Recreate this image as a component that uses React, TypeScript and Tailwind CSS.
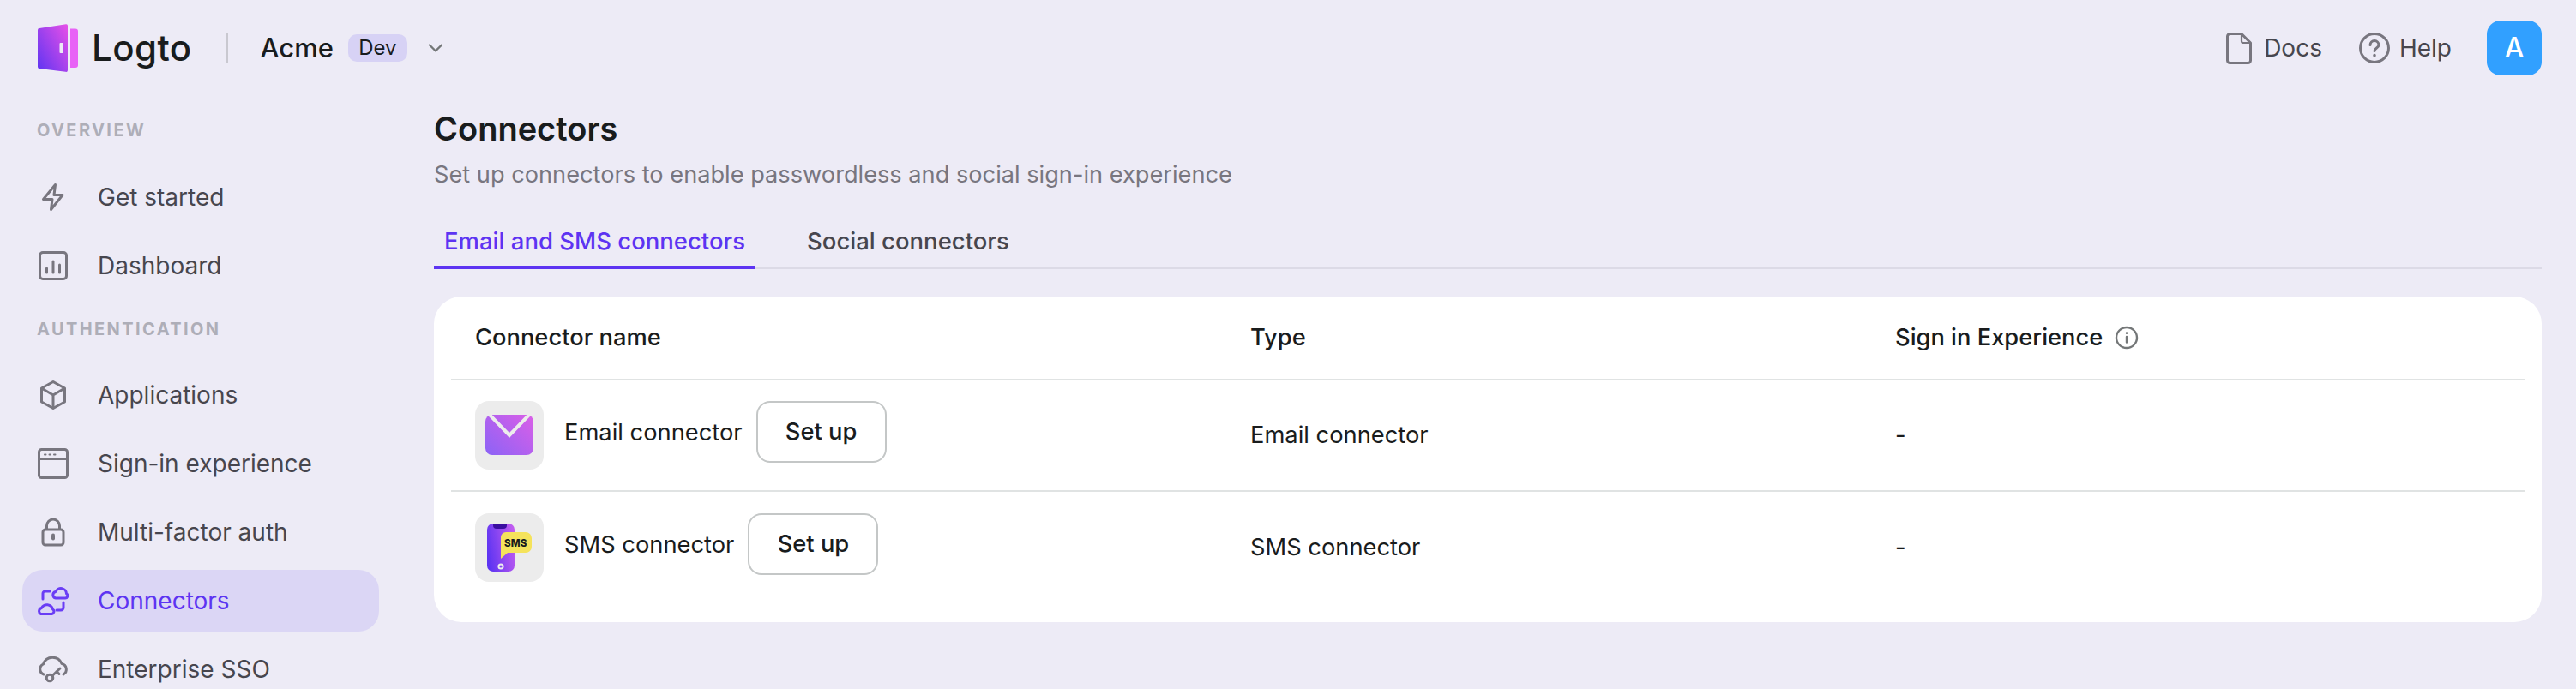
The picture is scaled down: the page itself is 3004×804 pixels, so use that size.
import { ChevronDown } from "lucide-react";
import type { ReactNode } from "react";

const iconClass = "h-9 w-9 shrink-0";

const Bolt = () => (
  <svg viewBox="0 0 36 36" className={iconClass} fill="none" stroke="#78767f" strokeWidth="3" strokeLinejoin="round" strokeLinecap="round">
    <path d="M20.5 3.5 L6.5 20.5 H17 L15.5 32.5 L29 15.5 H19 Z" />
  </svg>
);

const Chart = () => (
  <svg viewBox="0 0 36 36" className={iconClass} fill="none" stroke="#78767f" strokeWidth="3" strokeLinecap="round">
    <rect x="2.5" y="2.5" width="31" height="31" rx="3.5" />
    <path d="M10.5 21v5M18 13v13M25.5 17v9" />
  </svg>
);

const Cube = () => (
  <svg viewBox="0 0 36 36" className={iconClass} fill="none" stroke="#78767f" strokeWidth="3" strokeLinejoin="round">
    <path d="M18 2.5 L31.5 10 V26 L18 33.5 L4.5 26 V10 Z" />
    <path d="M4.5 10 L18 18 L31.5 10 M18 18 V33.5" />
  </svg>
);

const Browser = () => (
  <svg viewBox="0 0 36 36" className={iconClass} fill="none" stroke="#78767f" strokeWidth="3">
    <rect x="1.5" y="1.5" width="33" height="33" rx="3" />
    <path d="M1.5 12.5h33" />
    <path d="M8 7.5h1.5M13.5 7.5h1.5M19 7.5h1.5" strokeLinecap="round" strokeWidth="2" />
  </svg>
);

const Lock = () => (
  <svg viewBox="0 0 36 36" className={iconClass} fill="none" stroke="#78767f" strokeWidth="3">
    <rect x="6" y="15" width="24" height="18" rx="3" />
    <path d="M10.5 15V10.5a7.5 7.5 0 0 1 15 0V15" />
    <path d="M18 21.5v4" strokeLinecap="round" strokeWidth="4" />
  </svg>
);

const Clouds = () => (
  <svg viewBox="0 0 36 36" className={iconClass} fill="none" stroke="#6a3df5" strokeWidth="3" strokeLinecap="round" strokeLinejoin="round">
    <path d="M21 15h11a2.8 2.8 0 0 0 1.5-5.2A6.5 6.5 0 0 0 21 7.5 3.8 3.8 0 0 0 21 15Z" />
    <path d="M14 7H8.5A2.5 2.5 0 0 0 6 9.5V16" />
    <path d="M3.5 33.5h13a3 3 0 0 0 1-5.5 7 7 0 0 0-13-1.5 3.8 3.8 0 0 0-1 7Z" />
    <path d="M30 20v6a3 3 0 0 1-3 3h-5" />
  </svg>
);

const CloudKey = () => (
  <svg viewBox="0 0 36 36" className={iconClass} fill="none" stroke="#78767f" strokeWidth="3" strokeLinecap="round" strokeLinejoin="round">
    <path d="M7 24A6.5 6.5 0 0 1 6.5 12 11.5 11.5 0 0 1 28 11.5 6.8 6.8 0 0 1 30 24" />
    <circle cx="14" cy="28" r="3.8" />
    <path d="M17 25.5 26 17M22 20.5l3 3" />
  </svg>
);

const Doc = () => (
  <svg viewBox="0 0 30 37" className="h-[37px] w-[30px] shrink-0" fill="none" stroke="#78767f" strokeWidth="3" strokeLinejoin="round">
    <path d="M4.5 1.5H18L28.5 12V32.5a3 3 0 0 1-3 3H4.5a3 3 0 0 1-3-3V4.5a3 3 0 0 1 3-3Z" />
    <path d="M18 2v8a2 2 0 0 0 2 2h8" strokeWidth="2.2" />
  </svg>
);

const HelpCircle = () => (
  <svg viewBox="0 0 36 36" className="h-9 w-9 shrink-0" fill="none" stroke="#78767f" strokeWidth="3" strokeLinecap="round">
    <circle cx="18" cy="18" r="16.5" />
    <path d="M13 14.5a5 5 0 0 1 10 0c0 3.5-5 3.5-5 7" />
    <path d="M18 26.5v.2" strokeWidth="3.5" />
  </svg>
);

const Info = () => (
  <svg viewBox="0 0 28 28" className="h-7 w-7" fill="none" stroke="#747778" strokeWidth="2.4" strokeLinecap="round">
    <circle cx="14" cy="14" r="12" />
    <path d="M14 13v6.5M14 8.5v.2" />
  </svg>
);

const LogtoMark = () => (
  <svg viewBox="0 0 47 56" className="h-14 w-[47px] shrink-0">
    <defs>
      <linearGradient id="door" x1="0" y1="1" x2="1" y2="0.1">
        <stop offset="0" stopColor="#5d34f2" />
        <stop offset="1" stopColor="#e14fe8" />
      </linearGradient>
    </defs>
    <path d="M2 5 L33 0.3 a1.8 1.8 0 0 1 2 1.8 V54 a2 2 0 0 1-2.5 1.8 L2 52 a2 2 0 0 1-2-2 V7 a2 2 0 0 1 2-2 Z" fill="url(#door)" />
    <path d="M38 5.5 h6 a3 3 0 0 1 3 3 V48 a3 3 0 0 1-3 3 h-6 Z" fill="#e862f6" />
    <rect x="25.5" y="22" width="4.5" height="12" rx="1" fill="#ece9f5" />
  </svg>
);

const MailIcon = () => (
  <svg viewBox="0 0 56 48" className="h-12 w-14">
    <defs>
      <linearGradient id="mail" x1="0" y1="1" x2="1" y2="0.1">
        <stop offset="0" stopColor="#8b63f6" />
        <stop offset="1" stopColor="#d75fe8" />
      </linearGradient>
    </defs>
    <rect x="0" y="0" width="56" height="47" rx="8" fill="url(#mail)" />
    <path d="M4 -1 L28 24 L52 -1" fill="none" stroke="#ececec" strokeWidth="4" />
  </svg>
);

const SmsIcon = () => (
  <svg viewBox="0 0 52 56" className="h-14 w-[52px]">
    <defs>
      <linearGradient id="phone" x1="0" y1="0.6" x2="1" y2="0.3">
        <stop offset="0" stopColor="#5d34f2" />
        <stop offset="1" stopColor="#c05cf0" />
      </linearGradient>
    </defs>
    <rect x="0" y="0" width="32" height="56" rx="7" fill="url(#phone)" />
    <path d="M7 0 H23 V2 a4 4 0 0 1-4 4 H11 a4 4 0 0 1-4-4 Z" fill="#3a0ea0" />
    <circle cx="16" cy="50" r="2.6" fill="none" stroke="#ececec" strokeWidth="2" />
    <path d="M22 10 H45 a7 7 0 0 1 7 7 V19 V27 a7 7 0 0 1-7 7 H24 L16 41 V16 a6 6 0 0 1 6-6 Z" fill="#f5e35b" />
    <text x="20" y="27" fontFamily="Inter, sans-serif" fontWeight="800" fontSize="11.5" fill="#191c1d" letterSpacing="0.2">SMS</text>
  </svg>
);

const NavHeading = ({ children }: { children: ReactNode }) => (
  <p className="pl-[43px] text-[20px] leading-[24px] font-bold tracking-[0.12em] text-[#aeaeb8]">{children}</p>
);

const NavItem = ({ icon, label, active }: { icon: ReactNode; label: string; active?: boolean }) => (
  <div
    className={`flex h-[72px] items-center gap-[34px] rounded-[24px] pl-[18px] text-[28px] leading-[40px] ${
      active ? "bg-[#dbd6f5] text-[#5d34f2]" : "text-[#47464e]"
    }`}
  >
    {icon}
    <span>{label}</span>
  </div>
);

const ConnectorRow = ({ icon, name, last }: { icon: ReactNode; name: string; last?: boolean }) => (
  <div className={`grid h-[130px] grid-cols-[904px_752px_1fr] items-center text-[27.3px] leading-[40px] text-[#191c1d] ${last ? "" : "border-b-2 border-[#e0e3e3]"}`}>
    <div className="flex items-center pl-[28px]">
      <div className="flex h-20 w-20 items-center justify-center rounded-[16px] bg-[#ececec]">{icon}</div>
      <span className="ml-6 -translate-y-[3px]">{name}</span>
      <button className="ml-4 h-[72px] w-[152px] -translate-y-[4px] rounded-[16px] border-2 border-[#c4c7c7] bg-white text-[27.3px] font-medium text-[#191c1d]">
        Set up
      </button>
    </div>
    <div className="pl-[28px]">{name}</div>
    <div className="pl-[28px]">-</div>
  </div>
);

export default function App() {
  return (
    <div className="flex h-[804px] w-[3004px] flex-col overflow-hidden bg-[#edebf6] font-['Inter',sans-serif]">
      <header className="flex h-[112px] shrink-0 items-center pr-[40px] pl-[44px]">
        <LogtoMark />
        <span className="ml-[16px] text-[42px] leading-[56px] font-medium tracking-[0.01em] text-[#191c1d]">Logto</span>
        <div className="ml-[40px] h-9 w-[2px] bg-[#c9c8d0]" />
        <span className="ml-[38px] text-[31px] leading-[40px] font-medium text-[#191c1d]">Acme</span>
        <span className="ml-[17px] flex h-8 w-[69px] items-center justify-center rounded-[10px] bg-[#d7d2f5] text-[24px] text-[#191c1d]">Dev</span>
        <ChevronDown className="ml-[19px] h-[28px] w-[28px] text-[#747778]" strokeWidth={2} />
        <div className="ml-auto flex items-center">
          <Doc />
          <span className="ml-[14px] text-[28px] leading-[40px] text-[#47464e]">Docs</span>
          <div className="ml-[43px]"><HelpCircle /></div>
          <span className="ml-[11px] text-[28px] leading-[40px] text-[#47464e]">Help</span>
          <div className="ml-[41px] flex h-16 w-16 items-center justify-center rounded-[16px] bg-[#31a0ff] text-[32px] font-medium text-white">A</div>
        </div>
      </header>

      <div className="flex min-h-0 flex-1">
        <aside className="w-[442px] shrink-0 pt-[28px] pl-[26px]">
          <div className="-ml-[26px]"><NavHeading>OVERVIEW</NavHeading></div>
          <div className="mt-[30px] flex flex-col gap-2">
            <NavItem icon={<Bolt />} label="Get started" />
            <NavItem icon={<Chart />} label="Dashboard" />
          </div>
          <div className="mt-[26px] -ml-[26px]"><NavHeading>AUTHENTICATION</NavHeading></div>
          <div className="mt-[29px] flex flex-col gap-2">
            <NavItem icon={<Cube />} label="Applications" />
            <NavItem icon={<Browser />} label="Sign-in experience" />
            <NavItem icon={<Lock />} label="Multi-factor auth" />
            <NavItem icon={<Clouds />} label="Connectors" active />
            <NavItem icon={<CloudKey />} label="Enterprise SSO" />
          </div>
        </aside>

        <main className="ml-[64px] w-[2458px] shrink-0">
          <h1 className="mt-[14px] text-[38px] leading-[48px] font-semibold text-[#191c1d]">Connectors</h1>
          <p className="mt-[10px] text-[27.2px] leading-[40px] text-[#78767f]">Set up connectors to enable passwordless and social sign-in experience</p>

          <div className="mt-[20px] flex h-[70px] border-b-2 border-[#dcdae6] text-[27.5px] leading-[40px]">
            <div className="h-[70px] border-b-4 border-[#5d34f2] px-[12px] pt-[17px] font-medium text-[#5d34f2]">Email and SMS connectors</div>
            <div className="ml-[60px] pt-[17px] font-medium text-[#47464e]">Social connectors</div>
          </div>

          <div className="mt-[32px] h-[380px] rounded-[32px] bg-white px-[20px]">
            <div className="grid h-[98px] grid-cols-[904px_752px_1fr] items-center border-b-2 border-[#e0e3e3] text-[27.3px] leading-[40px] font-medium text-[#191c1d]">
              <div className="pl-[28px]">Connector name</div>
              <div className="pl-[28px]">Type</div>
              <div className="flex items-center gap-[14px] pl-[28px]">
                Sign in Experience <Info />
              </div>
            </div>
            <ConnectorRow icon={<MailIcon />} name="Email connector" />
            <ConnectorRow icon={<SmsIcon />} name="SMS connector" last />
          </div>
        </main>
      </div>
    </div>
  );
}
